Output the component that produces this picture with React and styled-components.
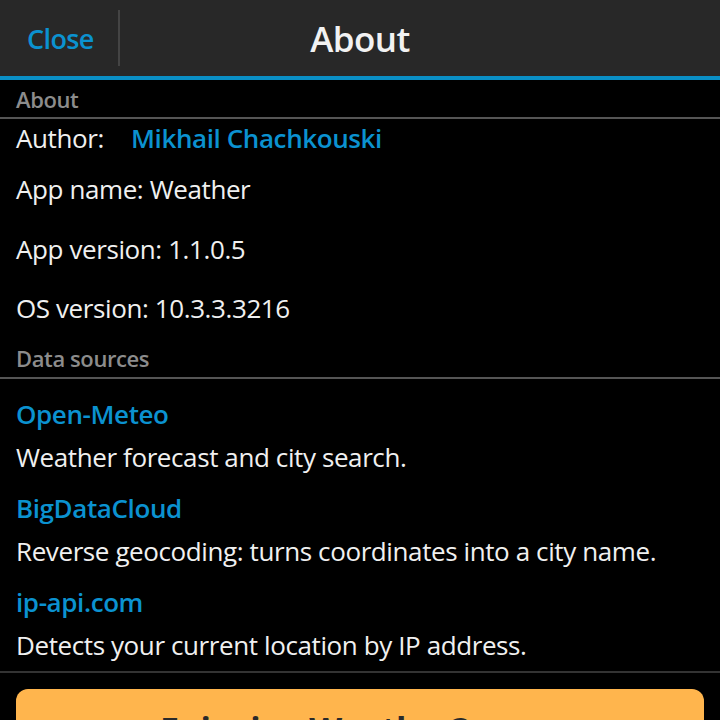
import React from "react";
import styled, { createGlobalStyle } from "styled-components";

const Global = createGlobalStyle`
  html, body { margin: 0; padding: 0; background: #000; }
  body { font-family: "Open Sans", "Liberation Sans", sans-serif; overflow: hidden; }
  #root { width: 720px; height: 720px; overflow: hidden; }
`;

const Page = styled.div`
  width: 720px;
  height: 720px;
  background: #000;
  display: flex;
  flex-direction: column;
  overflow: hidden;
`;

const TitleBar = styled.header`
  height: 76px;
  flex: none;
  background: #282828;
  border-bottom: 4px solid #0a8fc6;
  display: grid;
  grid-template-columns: 120px 1fr 120px;
  align-items: center;
`;

const CloseButton = styled.div`
  height: 56px;
  border-right: 2px solid #444;
  display: flex;
  align-items: center;
  padding-left: 27px;
  color: #0b92d0;
  font-size: 27px;
  font-weight: 600;
  letter-spacing: -0.6px;
`;

const Title = styled.h1`
  margin: 0;
  text-align: center;
  color: #f2f2f2;
  font-size: 35px;
  font-weight: 600;
  letter-spacing: -0.6px;
`;

const SectionHeader = styled.div`
  height: ${(p) => p.$h}px;
  flex: none;
  border-bottom: 2px solid #555;
  display: flex;
  align-items: center;
  padding-left: 16px;
  color: #8c8c8c;
  font-size: 22px;
  font-weight: 600;
  letter-spacing: -0.4px;
`;

const Row = styled.div`
  height: ${(p) => p.$h}px;
  flex: none;
  display: flex;
  align-items: center;
  padding-left: 16px;
  color: #f0f0f0;
  font-size: 26px;
  letter-spacing: -0.4px;
`;

const Label = styled.span`
  width: 115px;
`;

const Link = styled.span`
  color: #0b92d0;
  font-weight: 600;
`;

const SourceList = styled.div`
  flex: none;
  padding: 0 0 3px 16px;
  border-bottom: 2px solid #333;
`;

const Source = styled.div`
  display: flex;
  flex-direction: column;
  padding-top: ${(p) => p.$top}px;
`;

const SourceName = styled.div`
  height: 40px;
  display: flex;
  align-items: center;
  color: #0b92d0;
  font-size: 26px;
  font-weight: 600;
  letter-spacing: -0.4px;
`;

const SourceDesc = styled.div`
  height: 46px;
  display: flex;
  align-items: center;
  color: #f0f0f0;
  font-size: 26px;
  letter-spacing: -0.4px;
`;

const ButtonWrap = styled.div`
  padding: 16px 16px 0;
`;

const RateButton = styled.div`
  height: 80px;
  background: #ffb54d;
  border-radius: 12px;
  display: flex;
  justify-content: flex-start;
  padding: 17px 0 0 144px;
  box-sizing: border-box;
  color: #2a2a2a;
  font-size: 34px;
  font-weight: 700;
  letter-spacing: -0.4px;
  white-space: nowrap;
`;

const sources = [
  { name: "Open-Meteo", desc: "Weather forecast and city search.", top: 15 },
  { name: "BigDataCloud", desc: "Reverse geocoding: turns coordinates into a city name.", top: 8 },
  { name: "ip-api.com", desc: "Detects your current location by IP address.", top: 8 },
];

export default function App() {
  return (
    <Page>
      <Global />
      <TitleBar>
        <CloseButton>Close</CloseButton>
        <Title>About</Title>
        <div />
      </TitleBar>
      <SectionHeader $h={37}>About</SectionHeader>
      <Row $h={38}>
        <Label>Author:</Label>
        <Link>Mikhail Chachkouski</Link>
      </Row>
      <Row $h={64}>App name: Weather</Row>
      <Row $h={56}>App version: 1.1.0.5</Row>
      <Row $h={62}>OS version: 10.3.3.3216</Row>
      <SectionHeader $h={38}>Data sources</SectionHeader>
      <SourceList>
        {sources.map((s) => (
          <Source key={s.name} $top={s.top}>
            <SourceName>{s.name}</SourceName>
            <SourceDesc>{s.desc}</SourceDesc>
          </Source>
        ))}
      </SourceList>
      <ButtonWrap>
        <RateButton>Enjoying Weather?</RateButton>
      </ButtonWrap>
    </Page>
  );
}
